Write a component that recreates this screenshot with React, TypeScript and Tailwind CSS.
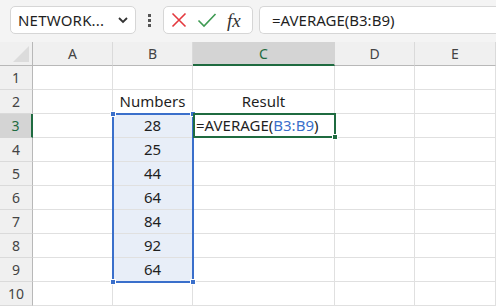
import React from 'react';

const cols = [
  { key: 'A', w: 'w-[80px]' },
  { key: 'B', w: 'w-[80px]' },
  { key: 'C', w: 'w-[142px]' },
  { key: 'D', w: 'w-[80px]' },
  { key: 'E', w: 'w-[81px]' },
];

const data: Record<number, Record<string, React.ReactNode>> = {
  2: { B: 'Numbers', C: 'Result' },
  4: { B: '25' },
  5: { B: '44' },
  6: { B: '64' },
  7: { B: '84' },
  8: { B: '92' },
  9: { B: '64' },
  3: { B: '28' },
};

function Handle({ className }: { className: string }) {
  return <div className={`absolute w-[6px] h-[6px] border border-white ${className}`} />;
}

export default function App() {
  const rows = [1, 2, 3, 4, 5, 6, 7, 8, 9, 10];
  return (
    <div className="w-[496px] h-[307px] overflow-hidden bg-white font-['Noto_Sans','Open_Sans',sans-serif] text-[#1f1f1f]">
      {/* formula bar */}
      <div className="h-[42px] bg-[#f4f4f4] flex items-start pt-[6px] pl-[10px]">
        <div className="w-[126px] h-[28px] bg-white border border-[#d6d6d6] rounded-[5px] flex items-center pl-[7px] pr-[6px]">
          <span className="text-[15px] tracking-[0.2px] flex-1">NETWORK...</span>
          <svg width="12" height="8" viewBox="0 0 12 8">
            <path d="M2 2 L6 6 L10 2" stroke="#333" strokeWidth="1.8" fill="none" />
          </svg>
        </div>
        <div className="w-[27px] h-[28px] flex flex-col items-center justify-center gap-[2px]">
          <div className="w-[3px] h-[3px] bg-[#555]" />
          <div className="w-[3px] h-[3px] bg-[#555]" />
          <div className="w-[3px] h-[3px] bg-[#555]" />
        </div>
        <div className="w-[90px] h-[28px] bg-white border border-[#d6d6d6] rounded-[5px] flex items-center pl-[7px] gap-[10px]">
          <svg width="16" height="16" viewBox="0 0 16 16">
            <path d="M1.5 1.5 L14.5 14.5 M14.5 1.5 L1.5 14.5" stroke="#e4393e" strokeWidth="1.6" fill="none" />
          </svg>
          <svg width="20" height="16" viewBox="0 0 20 16">
            <path d="M1.5 8.5 L7 14 L18.5 2" stroke="#3e9a52" strokeWidth="1.6" fill="none" />
          </svg>
          <span className="font-['Liberation_Serif',serif] italic text-[19px] text-[#333] leading-none">fx</span>
        </div>
        <div className="ml-[6px] flex-1 h-[28px] bg-white border border-[#d6d6d6] border-r-0 rounded-l-[5px] flex items-center pl-[12px]">
          <span className="text-[15px]">=AVERAGE(B3:B9)</span>
        </div>
      </div>

      {/* grid */}
      <div className="relative">
        {/* column header */}
        <div className="flex h-[24px] bg-[#f0f0f0] text-[14px] text-[#444]">
          <div className="w-[33px] h-full border-r border-b border-[#b8b8b8] relative">
            <div className="absolute right-[3px] bottom-[3px] w-0 h-0 border-l-[16px] border-l-transparent border-b-[16px] border-b-[#dcdcdc]" />
          </div>
          {cols.map((c) =>
            c.key === 'C' ? (
              <div key={c.key} className={`${c.w} h-full bg-[#d4d4d4] border-b-2 border-[#1f6b40] border-r border-r-[#d4d4d4] flex items-center justify-center text-[#1f6b40]`}>
                {c.key}
              </div>
            ) : (
              <div key={c.key} className={`${c.w} h-full border-r border-[#dadada] border-b border-b-[#b8b8b8] flex items-center justify-center`}>
                {c.key}
              </div>
            )
          )}
        </div>

        {rows.map((r) => (
          <div key={r} className="flex h-[24px] text-[15px]">
            <div
              className={`w-[33px] h-full flex items-center justify-center text-[14px] ${
                r === 3
                  ? 'bg-[#d4d4d4] text-[#1f6b40] border-r-2 border-[#1f6b40] border-b border-b-[#d4d4d4]'
                  : 'bg-[#f0f0f0] text-[#444] border-r border-[#b8b8b8] border-b border-b-[#dadada]'
              }`}
            >
              {r}
            </div>
            {cols.map((c) => {
              const inSel = c.key === 'B' && r >= 3 && r <= 9;
              return (
                <div
                  key={c.key}
                  className={`${c.w} h-full border-r border-b border-[#e0e0e0] flex items-center justify-center ${
                    inSel ? 'bg-[#e8eef8]' : ''
                  }`}
                >
                  {data[r]?.[c.key]}
                </div>
              );
            })}
          </div>
        ))}

        {/* B3:B9 selection */}
        <div className="absolute left-[112px] top-[71px] w-[82px] h-[170px] border-2 border-[#3a6fcb] pointer-events-none">
          <Handle className="-left-[4px] -top-[4px] bg-[#3a6fcb]" />
          <Handle className="-right-[4px] -top-[4px] bg-[#3a6fcb]" />
          <Handle className="-left-[4px] -bottom-[4px] bg-[#3a6fcb]" />
          <Handle className="-right-[4px] -bottom-[4px] bg-[#3a6fcb]" />
        </div>

        {/* active cell C3 */}
        <div className="absolute left-[193px] top-[71px] w-[143px] h-[25px] border-2 border-[#1f6b40] bg-white flex items-center pl-[1px] text-[15px] whitespace-nowrap">
          <span>=AVERAGE(</span>
          <span className="text-[#3a6fcb]">B3:B9</span>
          <span>)</span>
          <Handle className="-right-[4px] -bottom-[4px] bg-[#1f6b40]" />
        </div>
      </div>
    </div>
  );
}
